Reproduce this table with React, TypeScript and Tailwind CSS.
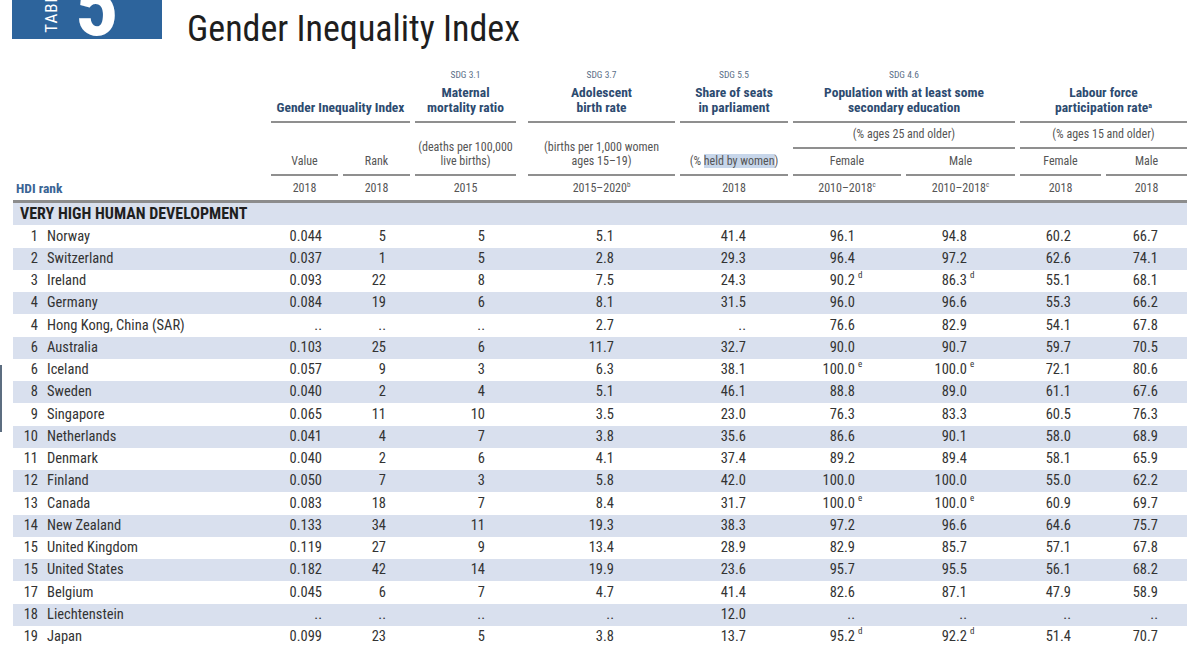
import React from "react";

const FONT = "font-['Roboto','Open_Sans',sans-serif] font-stretch-condensed";
const COLS = "grid grid-cols-[253px_67px_67px_108px_147px_108px_108px_109px_81px_81px] gap-x-[5px]";
const RULE = "border-b-2 border-[#8f8f8f]";

// right padding of the figures in each numeric column
const PAD = [
  "pr-[16px]",
  "pr-[24px]",
  "pr-[38px]",
  "pr-[61px]",
  "pr-[42px]",
  "pr-[46px]",
  "pr-[48px]",
  "pr-[30px]",
  "pr-[29px]",
];

const rows: string[][] = [
  ["1", "Norway", "0.044", "5", "5", "5.1", "41.4", "96.1", "94.8", "60.2", "66.7"],
  ["2", "Switzerland", "0.037", "1", "5", "2.8", "29.3", "96.4", "97.2", "62.6", "74.1"],
  ["3", "Ireland", "0.093", "22", "8", "7.5", "24.3", "90.2^d", "86.3^d", "55.1", "68.1"],
  ["4", "Germany", "0.084", "19", "6", "8.1", "31.5", "96.0", "96.6", "55.3", "66.2"],
  ["4", "Hong Kong, China (SAR)", "..", "..", "..", "2.7", "..", "76.6", "82.9", "54.1", "67.8"],
  ["6", "Australia", "0.103", "25", "6", "11.7", "32.7", "90.0", "90.7", "59.7", "70.5"],
  ["6", "Iceland", "0.057", "9", "3", "6.3", "38.1", "100.0^e", "100.0^e", "72.1", "80.6"],
  ["8", "Sweden", "0.040", "2", "4", "5.1", "46.1", "88.8", "89.0", "61.1", "67.6"],
  ["9", "Singapore", "0.065", "11", "10", "3.5", "23.0", "76.3", "83.3", "60.5", "76.3"],
  ["10", "Netherlands", "0.041", "4", "7", "3.8", "35.6", "86.6", "90.1", "58.0", "68.9"],
  ["11", "Denmark", "0.040", "2", "6", "4.1", "37.4", "89.2", "89.4", "58.1", "65.9"],
  ["12", "Finland", "0.050", "7", "3", "5.8", "42.0", "100.0", "100.0", "55.0", "62.2"],
  ["13", "Canada", "0.083", "18", "7", "8.4", "31.7", "100.0^e", "100.0^e", "60.9", "69.7"],
  ["14", "New Zealand", "0.133", "34", "11", "19.3", "38.3", "97.2", "96.6", "64.6", "75.7"],
  ["15", "United Kingdom", "0.119", "27", "9", "13.4", "28.9", "82.9", "85.7", "57.1", "67.8"],
  ["15", "United States", "0.182", "42", "14", "19.9", "23.6", "95.7", "95.5", "56.1", "68.2"],
  ["17", "Belgium", "0.045", "6", "7", "4.7", "41.4", "82.6", "87.1", "47.9", "58.9"],
  ["18", "Liechtenstein", "..", "..", "..", "..", "12.0", "..", "..", "..", ".."],
  ["19", "Japan", "0.099", "23", "5", "3.8", "13.7", "95.2^d", "92.2^d", "51.4", "70.7"],
];

const Figure = ({ v }: { v: string }) => {
  const [num, sup] = v.split("^");
  return (
    <span className="relative">
      {num}
      {sup && <span className="absolute left-full top-[-3px] pl-[3px] text-[9px]">{sup}</span>}
    </span>
  );
};

const Sdg = ({ children }: { children: React.ReactNode }) => (
  <div className="text-[9.5px] leading-[12px] text-[#5b6f88] mb-[4px]">{children}</div>
);

const Title = ({ children }: { children: React.ReactNode }) => (
  <div className="text-[13.5px] leading-[15px] font-bold text-[#2d4b70]">{children}</div>
);

export default function App() {
  return (
    <div className={`relative w-[1200px] h-[647px] overflow-hidden bg-white ${FONT}`}>
      <div className="absolute left-0 top-[365px] w-[2px] h-[67px] bg-[#5c6d80]" />

      {/* title */}
      <div className="flex h-[62px] items-start">
        <div className="relative ml-[12px] w-[150px] h-[39px] overflow-hidden bg-[#2d649c] text-white">
          <span className="absolute left-[31px] bottom-[6px] text-[17px] leading-[16px] tracking-[1px] [writing-mode:vertical-rl] rotate-180">
            TABLE
          </span>
          <span className="absolute left-[63px] top-[-37px] text-[86px] leading-none font-bold">5</span>
        </div>
        <h1 className="ml-[25px] mt-[10px] text-[36px] leading-[38px] text-[#1e1e1e]">Gender Inequality Index</h1>
      </div>

      {/* column headers */}
      <div className={`${COLS} ml-[13px] grid-rows-[61px_26px_27px_24px] text-[12px] text-[#555] text-center`}>
        <div className={`col-start-2 col-span-2 row-start-1 flex flex-col justify-end pb-[6px] ${RULE}`}>
          <Title>Gender Inequality Index</Title>
        </div>
        <div className={`col-start-2 row-start-2 row-span-2 flex items-end justify-center pb-[6px] leading-[14px] ${RULE}`}>Value</div>
        <div className={`col-start-3 row-start-2 row-span-2 flex items-end justify-center pb-[6px] leading-[14px] ${RULE}`}>Rank</div>

        <div className={`col-start-4 row-start-1 mr-[7px] flex flex-col justify-end pb-[6px] ${RULE}`}>
          <Sdg>SDG 3.1</Sdg>
          <Title>Maternal<br />mortality ratio</Title>
        </div>
        <div className={`col-start-4 row-start-2 row-span-2 mr-[7px] flex flex-col justify-end pb-[6px] leading-[14px] ${RULE}`}>
          <div>(deaths per 100,000</div>
          <div>live births)</div>
        </div>

        <div className={`col-start-5 row-start-1 flex flex-col justify-end pb-[6px] ${RULE}`}>
          <Sdg>SDG 3.7</Sdg>
          <Title>Adolescent<br />birth rate</Title>
        </div>
        <div className={`col-start-5 row-start-2 row-span-2 flex flex-col justify-end pb-[6px] leading-[14px] ${RULE}`}>
          <div>(births per 1,000 women</div>
          <div>ages 15–19)</div>
        </div>

        <div className={`col-start-6 row-start-1 flex flex-col justify-end pb-[6px] ${RULE}`}>
          <Sdg>SDG 5.5</Sdg>
          <Title>Share of seats<br />in parliament</Title>
        </div>
        <div className={`col-start-6 row-start-2 row-span-2 flex items-end justify-center pb-[6px] leading-[14px] whitespace-nowrap ${RULE}`}>
          <span>
            (% <span className="bg-[#c7d6ea]">held by women</span>)
          </span>
        </div>

        <div className={`col-start-7 col-span-2 row-start-1 flex flex-col justify-end pb-[6px] ${RULE}`}>
          <Sdg>SDG 4.6</Sdg>
          <Title>Population with at least some<br />secondary education</Title>
        </div>
        <div className={`col-start-7 col-span-2 row-start-2 flex items-center justify-center pb-[2px] ${RULE}`}>(% ages 25 and older)</div>
        <div className={`col-start-7 row-start-3 flex items-center justify-center pb-[2px] ${RULE}`}>Female</div>
        <div className={`col-start-8 row-start-3 flex items-center justify-center pb-[2px] ${RULE}`}>Male</div>

        <div className={`col-start-9 col-span-2 row-start-1 flex flex-col justify-end pb-[6px] ${RULE}`}>
          <Title>
            Labour force<br />participation rate<sup className="text-[8px]">a</sup>
          </Title>
        </div>
        <div className={`col-start-9 col-span-2 row-start-2 flex items-center justify-center pb-[2px] ${RULE}`}>(% ages 15 and older)</div>
        <div className={`col-start-9 row-start-3 flex items-center justify-center pb-[2px] ${RULE}`}>Female</div>
        <div className={`col-start-10 row-start-3 flex items-center justify-center pb-[2px] ${RULE}`}>Male</div>

        <div className="col-start-1 row-start-4 flex items-center pl-[3px] text-left text-[13.5px] font-bold text-[#3a6494]">HDI rank</div>
        <div className="col-start-2 row-start-4 flex items-center justify-center">2018</div>
        <div className="col-start-3 row-start-4 flex items-center justify-center">2018</div>
        <div className="col-start-4 row-start-4 mr-[7px] flex items-center justify-center">2015</div>
        <div className="col-start-5 row-start-4 flex items-center justify-center">
          2015–2020<sup className="text-[7px]">b</sup>
        </div>
        <div className="col-start-6 row-start-4 flex items-center justify-center">2018</div>
        <div className="col-start-7 row-start-4 flex items-center justify-center">
          2010–2018<sup className="text-[7px]">c</sup>
        </div>
        <div className="col-start-8 row-start-4 flex items-center justify-center">
          2010–2018<sup className="text-[7px]">c</sup>
        </div>
        <div className="col-start-9 row-start-4 flex items-center justify-center">2018</div>
        <div className="col-start-10 row-start-4 flex items-center justify-center">2018</div>
      </div>

      <div className="ml-[13px] w-[1174px] h-[3px] bg-[#8c8c8c]" />

      {/* body */}
      <div className="ml-[13px] w-[1174px] text-[14.5px] text-[#333]">
        <div className="h-[22.25px] flex items-center bg-[#d9e0ee] pl-[7px] text-[16px] font-bold text-[#1f1f1f]">
          VERY HIGH HUMAN DEVELOPMENT
        </div>
        {rows.map((r, i) => (
          <div
            key={r[1]}
            className={`${COLS} h-[22.25px] items-center ${i % 2 === 1 ? "bg-[#d9e0ee]" : ""}`}
          >
            <div className="flex whitespace-nowrap">
              <span className="w-[25px] text-right">{r[0]}</span>
              <span className="ml-[9px]">{r[1]}</span>
            </div>
            {r.slice(2).map((v, j) => (
              <div key={j} className={`text-right ${PAD[j]}`}>
                <Figure v={v} />
              </div>
            ))}
          </div>
        ))}
      </div>
    </div>
  );
}
